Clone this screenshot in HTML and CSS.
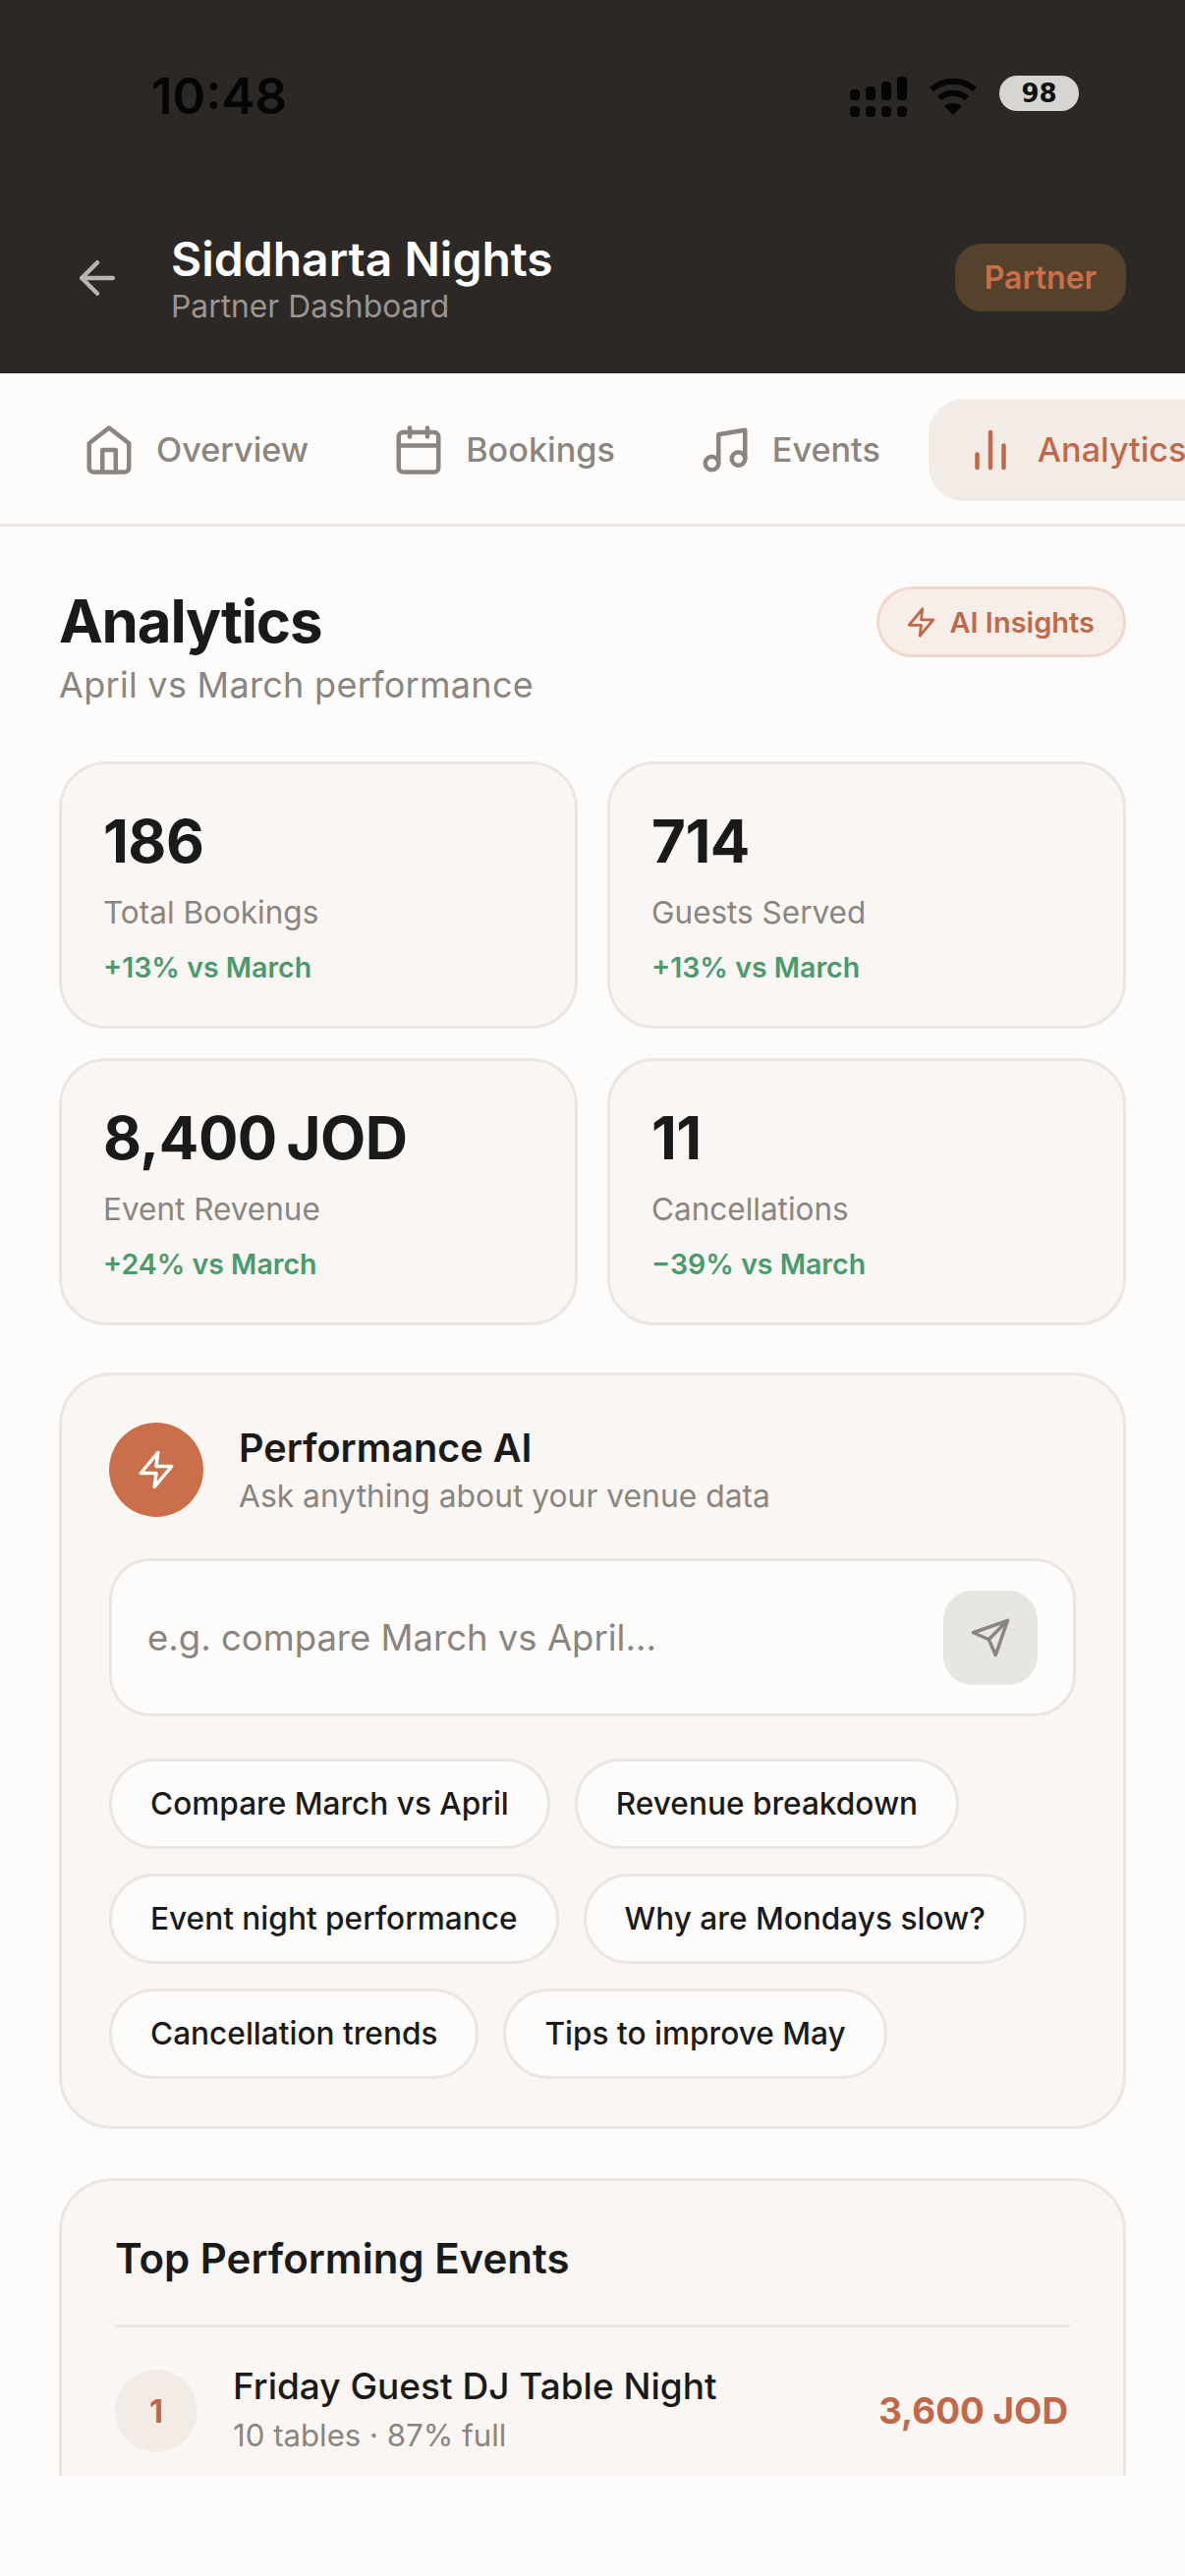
FILE: index.html
```html
<!DOCTYPE html>
<html lang="en">
<head>
<meta charset="utf-8">
<title>Analytics</title>
<link rel="stylesheet" href="styles.css">
</head>
<body>
<div class="app">
  <header class="top">
    <div class="status">
      <span class="time">10:48</span>
      <div class="status-icons">
        <svg class="signal" viewBox="0 0 58 41" fill="#050505">
          <rect x="0" y="13" width="10" height="11" rx="4"/><rect x="16" y="10" width="10" height="14" rx="4"/><rect x="32" y="5" width="10" height="19" rx="4"/><rect x="48" y="0" width="10" height="24" rx="4"/>
          <rect x="0" y="30" width="10" height="11" rx="4"/><rect x="16" y="30" width="10" height="11" rx="4"/><rect x="32" y="30" width="10" height="11" rx="4"/><rect x="48" y="30" width="10" height="11" rx="4"/>
        </svg>
        <svg class="wifi" viewBox="0 0 50 37" fill="none" stroke="#050505" stroke-width="6">
          <path d="M3 11C16 0 34 0 47 11"/><path d="M11 20C19 13 31 13 39 20"/><path d="M25 37 16 28C21 24 29 24 34 28Z" fill="#050505" stroke="none"/>
        </svg>
        <span class="battery">98</span>
      </div>
    </div>
    <div class="head-row">
      <svg class="back" viewBox="0 0 24 24" fill="none" stroke="#b8b4b0" stroke-width="2" stroke-linecap="round" stroke-linejoin="round"><path d="M19 12H5"/><path d="m12 19-7-7 7-7"/></svg>
      <div class="head-text">
        <div class="venue">Siddharta Nights</div>
        <div class="venue-sub">Partner Dashboard</div>
      </div>
      <span class="partner">Partner</span>
    </div>
  </header>

  <nav class="tabs">
    <div class="tab">
      <svg class="tab-icon" viewBox="0 0 24 24"><path d="m3 9 9-7 9 7v11a2 2 0 0 1-2 2H5a2 2 0 0 1-2-2z"/><path d="M9 22V12h6v10"/></svg>
      <span>Overview</span>
    </div>
    <div class="tab">
      <svg class="tab-icon" viewBox="0 0 24 24"><rect x="3" y="4" width="18" height="18" rx="2"/><path d="M16 2v4M8 2v4M3 10h18"/></svg>
      <span>Bookings</span>
    </div>
    <div class="tab">
      <svg class="tab-icon" viewBox="0 0 24 24"><path d="M9 18V5l12-2v13"/><circle cx="6" cy="18" r="3"/><circle cx="18" cy="16" r="3"/></svg>
      <span>Events</span>
    </div>
    <div class="tab tab-active">
      <svg class="tab-icon" viewBox="0 0 24 24"><path d="M18 20V10M12 20V4M6 20v-6"/></svg>
      <span>Analytics</span>
    </div>
  </nav>

  <main class="content">
    <div class="title-row">
      <div>
        <h1 class="title">Analytics</h1>
        <p class="subtitle">April vs March performance</p>
      </div>
      <span class="insights">
        <svg class="insights-icon" viewBox="0 0 24 24"><path d="M13 2 3 14h9l-1 8 10-12h-9z"/></svg>
        AI Insights
      </span>
    </div>

    <section class="stats">
      <div class="stat"><div class="stat-num">186</div><div class="stat-label">Total Bookings</div><div class="stat-delta">+13% vs March</div></div>
      <div class="stat"><div class="stat-num">714</div><div class="stat-label">Guests Served</div><div class="stat-delta">+13% vs March</div></div>
      <div class="stat"><div class="stat-num">8,400 JOD</div><div class="stat-label">Event Revenue</div><div class="stat-delta">+24% vs March</div></div>
      <div class="stat"><div class="stat-num">11</div><div class="stat-label">Cancellations</div><div class="stat-delta">−39% vs March</div></div>
    </section>

    <section class="ai">
      <div class="ai-head">
        <div class="ai-badge">
          <svg class="ai-bolt" viewBox="0 0 24 24"><path d="M13 2 3 14h9l-1 8 10-12h-9z"/></svg>
        </div>
        <div>
          <div class="ai-title">Performance AI</div>
          <div class="ai-sub">Ask anything about your venue data</div>
        </div>
      </div>
      <div class="ask">
        <span class="ask-text">e.g. compare March vs April...</span>
        <span class="send">
          <svg class="send-icon" viewBox="0 0 24 24"><path d="m22 2-7 20-4-9-9-4z"/><path d="M22 2 11 13"/></svg>
        </span>
      </div>
      <div class="chips">
        <span class="chip">Compare March vs April</span>
        <span class="chip">Revenue breakdown</span>
        <span class="chip">Event night performance</span>
        <span class="chip">Why are Mondays slow?</span>
        <span class="chip">Cancellation trends</span>
        <span class="chip">Tips to improve May</span>
      </div>
    </section>

    <section class="topev">
      <h2 class="topev-title">Top Performing Events</h2>
      <div class="event">
        <span class="rank">1</span>
        <div class="event-main">
          <div class="event-name">Friday Guest DJ Table Night</div>
          <div class="event-sub">10 tables · 87% full</div>
        </div>
        <span class="event-amt">3,600 JOD</span>
      </div>
    </section>
  </main>
</div>
</body>
</html>
```
FILE: styles.css
```css
* { box-sizing: border-box; }
html, body { margin: 0; padding: 0; background: #fdfcfa; }
body { font-family: Inter, "Liberation Sans", sans-serif; color: #1a1a1a; }
.app { width: 1206px; height: 2520px; overflow: hidden; }

.top { height: 380px; background: #2c2825; padding: 0 60px 0 72px; }
.status { display: flex; justify-content: space-between; align-items: center; height: 60px; padding: 68px 48px 0 82px; box-sizing: content-box; }
.time { font-size: 51px; font-weight: 600; color: #050505; line-height: 60px; }
.status-icons { display: flex; align-items: center; gap: 22px; }
.signal { width: 58px; height: 41px; }
.wifi { width: 50px; height: 37px; }
.battery { width: 81px; height: 36px; margin-bottom: 6px; border-radius: 18px; background: #d6d5d1; color: #111; font-size: 26px; font-weight: 700; line-height: 36px; text-align: center; font-family: "DejaVu Sans", sans-serif; }

.head-row { display: flex; align-items: center; margin-top: 106px; }
.back { width: 54px; height: 54px; flex: none; }
.head-text { flex: 1; margin-left: 48px; }
.venue { font-size: 48px; font-weight: 600; color: #fff; line-height: 58px; margin-top: 1px; }
.venue-sub { font-size: 31.8px; color: #9a9590; line-height: 38px; }
.partner { width: 174px; height: 69px; border-radius: 27px; background: #55422d; color: #c96f4a; font-size: 32px; font-weight: 600; line-height: 69px; text-align: center; }

.tabs { height: 156px; display: flex; align-items: center; gap: 13px; padding: 2px 0 0 48px; border-bottom: 3px solid #ebe8e5; overflow: hidden; background: #fdfcfa; }
.tab { display: flex; align-items: center; gap: 21px; height: 104px; padding: 0 36px; font-size: 34.2px; font-weight: 500; color: #8a8580; flex: none; border-radius: 36px; }
.tab-icon { width: 54px; height: 54px; fill: none; stroke: currentColor; stroke-width: 2; stroke-linecap: round; stroke-linejoin: round; flex: none; }
.tab-active { background: #f3ece6; color: #c0694a; }

.content { padding: 60px 60px 0; }
.title-row { display: flex; justify-content: space-between; align-items: flex-start; }
.title { margin: 0; font-size: 60px; font-weight: 700; line-height: 72px; letter-spacing: -1.2px; color: #1a1a1a; }
.subtitle { margin: 5px 0 0; font-size: 36px; line-height: 48px; letter-spacing: .3px; color: #8a8580; }
.insights { display: flex; align-items: center; gap: 12px; height: 72px; margin-top: 1px; padding: 0 29px 0 26px; border: 3px solid #f0d8ce; border-radius: 36px; background: #f8eee9; color: #c0694a; font-size: 29px; font-weight: 600; }
.insights-icon { width: 33px; height: 33px; fill: none; stroke: currentColor; stroke-width: 2; stroke-linecap: round; stroke-linejoin: round; }

.stats { display: grid; grid-template-columns: 528px 528px; gap: 30px; margin-top: 54px; }
.stat { height: 272px; padding: 42px; background: #f9f6f4; border: 3px solid #e9e6e3; border-radius: 48px; }
.stat-num { font-size: 60px; font-weight: 700; line-height: 72px; letter-spacing: -.5px; word-spacing: -4px; color: #1a1a1a; }
.stat-label { margin-top: 16px; font-size: 31.5px; line-height: 42px; color: #8a8580; }
.stat-delta { margin-top: 17px; font-size: 28.5px; font-weight: 600; line-height: 36px; color: #4a9a6d; }

.ai { margin-top: 48px; height: 770px; padding: 48px; background: #f9f6f4; border: 3px solid #e9e6e3; border-radius: 54px; }
.ai-head { display: flex; align-items: center; gap: 36px; }
.ai-badge { width: 96px; height: 96px; border-radius: 50%; background: #c96f4a; display: flex; align-items: center; justify-content: center; flex: none; }
.ai-bolt { width: 42px; height: 42px; fill: none; stroke: #fff; stroke-width: 2; stroke-linecap: round; stroke-linejoin: round; }
.ai-title { font-size: 39.6px; font-weight: 600; line-height: 50px; color: #1a1a1a; }
.ai-sub { font-size: 31.8px; line-height: 42px; margin-top: 3px; color: #8a8580; }
.ask { display: flex; align-items: center; justify-content: space-between; height: 161px; margin-top: 42px; padding: 0 36px; background: #fdfcfa; border: 3px solid #e9e6e3; border-radius: 42px; }
.ask-text { font-size: 36.5px; color: #8a8580; }
.send { width: 96px; height: 96px; border-radius: 30px; background: #e8e6e3; display: flex; align-items: center; justify-content: center; }
.send-icon { width: 42px; height: 42px; fill: none; stroke: #8a8580; stroke-width: 2; stroke-linecap: round; stroke-linejoin: round; }
.chips { display: flex; flex-wrap: wrap; gap: 25px; margin-top: 43px; }
.chip { height: 92px; padding: 0 39px; border: 3px solid #e9e6e3; border-radius: 46px; background: #fdfcfa; font-size: 31.6px; font-weight: 500; line-height: 86px; color: #1a1a1a; }

.topev { margin-top: 50px; height: 500px; padding: 52px 54px 0 54px; background: #f9f6f4; border: 3px solid #e9e6e3; border-radius: 54px; }
.topev-title { margin: 0; padding-bottom: 40px; font-size: 42px; font-weight: 600; line-height: 54px; color: #1a1a1a; border-bottom: 3px solid #e9e6e3; }
.event { display: flex; align-items: center; gap: 36px; margin-top: 39px; }
.rank { width: 84px; height: 84px; border-radius: 50%; background: #f3ece6; color: #c0694a; font-size: 33px; font-weight: 700; line-height: 84px; text-align: center; flex: none; }
.event-main { flex: 1; }
.event-name { font-size: 37px; font-weight: 500; line-height: 46px; margin-top: -2px; color: #1a1a1a; }
.event-sub { font-size: 31.2px; line-height: 42px; margin-top: 6px; color: #8a8580; }
.event-amt { font-size: 36.8px; font-weight: 700; margin-right: 2px; margin-bottom: 2px; color: #c0694a; }
```
